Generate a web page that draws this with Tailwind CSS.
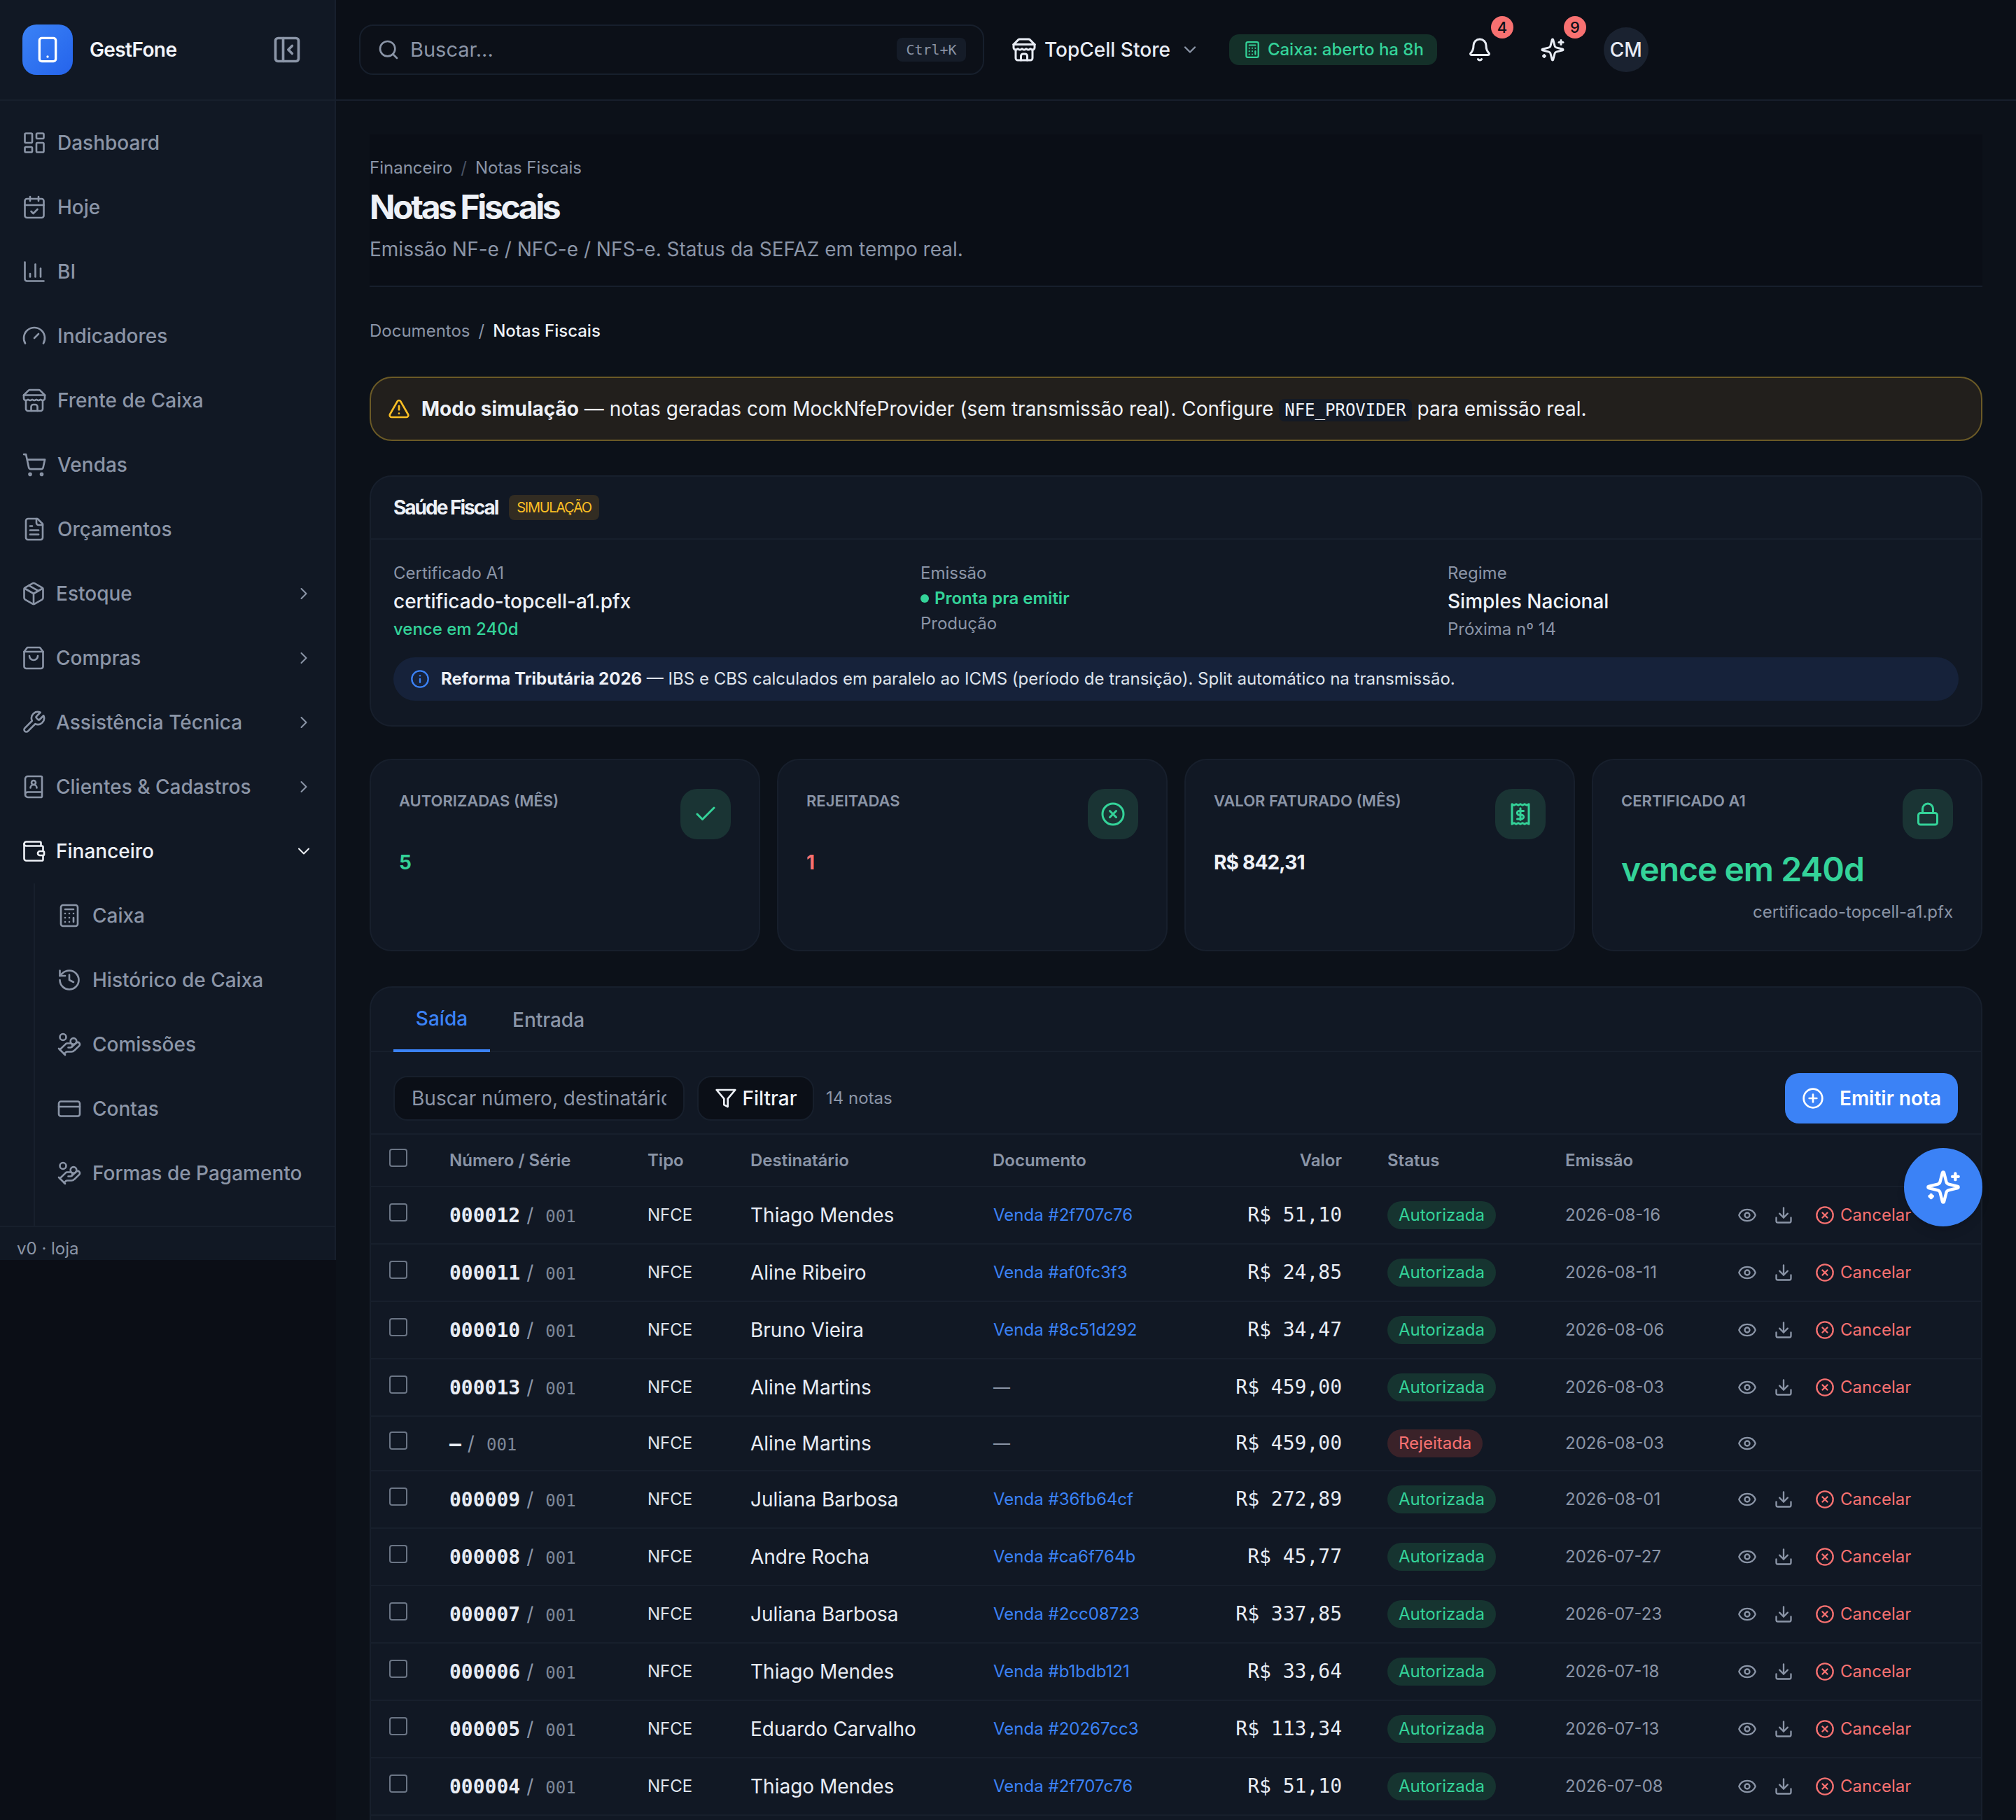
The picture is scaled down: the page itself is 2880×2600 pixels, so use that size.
<!DOCTYPE html>
<html lang="pt-BR">
<head>
<meta charset="utf-8">
<title>Notas Fiscais</title>
<script src="https://cdn.jsdelivr.net/npm/@tailwindcss/browser@4"></script>
</head>
<body class="bg-[#0b0f17]">
<svg class="absolute w-0 h-0" aria-hidden="true">
  <defs>
    <symbol id="i-phone" viewBox="0 0 24 24"><rect x="5" y="2" width="14" height="20" rx="2"/><path d="M12 18h.01"/></symbol>
    <symbol id="i-panel" viewBox="0 0 24 24"><rect x="3" y="3" width="18" height="18" rx="2"/><path d="M9 3v18"/><path d="m16 15-3-3 3-3"/></symbol>
    <symbol id="i-dash" viewBox="0 0 24 24"><rect x="3" y="3" width="7" height="9" rx="1"/><rect x="14" y="3" width="7" height="5" rx="1"/><rect x="14" y="12" width="7" height="9" rx="1"/><rect x="3" y="16" width="7" height="5" rx="1"/></symbol>
    <symbol id="i-cal" viewBox="0 0 24 24"><path d="M8 2v4"/><path d="M16 2v4"/><rect x="3" y="4" width="18" height="18" rx="2"/><path d="M3 10h18"/><path d="m9 16 2 2 4-4"/></symbol>
    <symbol id="i-chart" viewBox="0 0 24 24"><path d="M3 3v16a2 2 0 0 0 2 2h16"/><path d="M18 17V9"/><path d="M13 17V5"/><path d="M8 17v-3"/></symbol>
    <symbol id="i-gauge" viewBox="0 0 24 24"><path d="m12 14 4-4"/><path d="M3.34 19a10 10 0 1 1 17.32 0"/></symbol>
    <symbol id="i-store" viewBox="0 0 24 24"><path d="m2 7 4.41-4.41A2 2 0 0 1 7.83 2h8.34a2 2 0 0 1 1.42.59L22 7"/><path d="M4 12v8a2 2 0 0 0 2 2h12a2 2 0 0 0 2-2v-8"/><path d="M15 22v-4a2 2 0 0 0-2-2h-2a2 2 0 0 0-2 2v4"/><path d="M2 7h20"/><path d="M22 7v3a2 2 0 0 1-2 2a2.7 2.7 0 0 1-1.59-.63.7.7 0 0 0-.82 0A2.7 2.7 0 0 1 16 12a2.7 2.7 0 0 1-1.59-.63.7.7 0 0 0-.82 0A2.7 2.7 0 0 1 12 12a2.7 2.7 0 0 1-1.59-.63.7.7 0 0 0-.82 0A2.7 2.7 0 0 1 8 12a2.7 2.7 0 0 1-1.59-.63.7.7 0 0 0-.82 0A2.7 2.7 0 0 1 4 12a2 2 0 0 1-2-2V7"/></symbol>
    <symbol id="i-cart" viewBox="0 0 24 24"><circle cx="8" cy="21" r="1"/><circle cx="19" cy="21" r="1"/><path d="M2.05 2.05h2l2.66 12.42a2 2 0 0 0 2 1.58h9.78a2 2 0 0 0 1.95-1.57l1.65-7.43H5.12"/></symbol>
    <symbol id="i-file" viewBox="0 0 24 24"><path d="M15 2H6a2 2 0 0 0-2 2v16a2 2 0 0 0 2 2h12a2 2 0 0 0 2-2V7Z"/><path d="M14 2v4a2 2 0 0 0 2 2h4"/><path d="M10 9H8"/><path d="M16 13H8"/><path d="M16 17H8"/></symbol>
    <symbol id="i-package" viewBox="0 0 24 24"><path d="M11 21.73a2 2 0 0 0 2 0l7-4A2 2 0 0 0 21 16V8a2 2 0 0 0-1-1.73l-7-4a2 2 0 0 0-2 0l-7 4A2 2 0 0 0 3 8v8a2 2 0 0 0 1 1.73z"/><path d="M12 22V12"/><path d="M3.29 7 12 12l8.71-5"/><path d="m7.5 4.27 9 5.15"/></symbol>
    <symbol id="i-bag" viewBox="0 0 24 24"><path d="M6 2 3 6v14a2 2 0 0 0 2 2h14a2 2 0 0 0 2-2V6l-3-4Z"/><path d="M3 6h18"/><path d="M16 10a4 4 0 0 1-8 0"/></symbol>
    <symbol id="i-wrench" viewBox="0 0 24 24"><path d="M14.7 6.3a1 1 0 0 0 0 1.4l1.6 1.6a1 1 0 0 0 1.4 0l3.77-3.77a6 6 0 0 1-7.94 7.94l-6.91 6.91a2.12 2.12 0 0 1-3-3l6.91-6.91a6 6 0 0 1 7.94-7.94l-3.76 3.76z"/></symbol>
    <symbol id="i-book" viewBox="0 0 24 24"><path d="M15 13a3 3 0 1 0-6 0"/><path d="M4 19.5v-15A2.5 2.5 0 0 1 6.5 2H19a1 1 0 0 1 1 1v18a1 1 0 0 1-1 1H6.5a1 1 0 0 1 0-5H20"/><circle cx="12" cy="8" r="2"/></symbol>
    <symbol id="i-wallet" viewBox="0 0 24 24"><path d="M19 7V4a1 1 0 0 0-1-1H5a2 2 0 0 0 0 4h15a1 1 0 0 1 1 1v4h-3a2 2 0 0 0 0 4h3a1 1 0 0 0 1-1v-2a1 1 0 0 0-1-1"/><path d="M3 5v14a2 2 0 0 0 2 2h15a1 1 0 0 0 1-1v-4"/></symbol>
    <symbol id="i-calc" viewBox="0 0 24 24"><rect x="4" y="2" width="16" height="20" rx="2"/><path d="M8 6h8"/><path d="M16 14v4"/><path d="M16 10h.01"/><path d="M12 10h.01"/><path d="M8 10h.01"/><path d="M12 14h.01"/><path d="M8 14h.01"/><path d="M12 18h.01"/><path d="M8 18h.01"/></symbol>
    <symbol id="i-history" viewBox="0 0 24 24"><path d="M3 12a9 9 0 1 0 9-9 9.75 9.75 0 0 0-6.74 2.74L3 8"/><path d="M3 3v5h5"/><path d="M12 7v5l4 2"/></symbol>
    <symbol id="i-hand" viewBox="0 0 24 24"><path d="M11 15h2a2 2 0 1 0 0-4h-3c-.6 0-1.1.2-1.4.6L3 17"/><path d="m7 21 1.6-1.4c.3-.4.8-.6 1.4-.6h4c1.1 0 2.1-.4 2.8-1.2l4.6-4.4a2 2 0 0 0-2.75-2.91l-4.2 3.9"/><path d="m2 16 6 6"/><circle cx="16" cy="9" r="2.9"/><circle cx="6" cy="5" r="3"/></symbol>
    <symbol id="i-card" viewBox="0 0 24 24"><rect x="2" y="5" width="20" height="14" rx="2"/><path d="M2 10h20"/></symbol>
    <symbol id="i-right" viewBox="0 0 24 24"><path d="m9 18 6-6-6-6"/></symbol>
    <symbol id="i-down" viewBox="0 0 24 24"><path d="m6 9 6 6 6-6"/></symbol>
    <symbol id="i-search" viewBox="0 0 24 24"><circle cx="11" cy="11" r="8"/><path d="m21 21-4.3-4.3"/></symbol>
    <symbol id="i-warn" viewBox="0 0 24 24"><path d="m21.73 18-8-14a2 2 0 0 0-3.48 0l-8 14A2 2 0 0 0 4 21h16a2 2 0 0 0 1.73-3"/><path d="M12 9v4"/><path d="M12 17h.01"/></symbol>
    <symbol id="i-bell" viewBox="0 0 24 24"><path d="M10.268 21a2 2 0 0 0 3.464 0"/><path d="M3.262 15.326A1 1 0 0 0 4 17h16a1 1 0 0 0 .74-1.673C19.41 13.956 18 12.499 18 8A6 6 0 0 0 6 8c0 4.499-1.411 5.956-2.738 7.326"/></symbol>
    <symbol id="i-spark" viewBox="0 0 24 24"><path d="M9.937 15.5A2 2 0 0 0 8.5 14.063l-6.135-1.582a.5.5 0 0 1 0-.962L8.5 9.936A2 2 0 0 0 9.937 8.5l1.582-6.135a.5.5 0 0 1 .963 0L14.063 8.5A2 2 0 0 0 15.5 9.937l6.135 1.581a.5.5 0 0 1 0 .964L15.5 14.063a2 2 0 0 0-1.437 1.437l-1.582 6.135a.5.5 0 0 1-.963 0z"/><path d="M20 3v4"/><path d="M22 5h-4"/><path d="M4 17v2"/><path d="M5 18H3"/></symbol>
    <symbol id="i-info" viewBox="0 0 24 24"><circle cx="12" cy="12" r="10"/><path d="M12 16v-4"/><path d="M12 8h.01"/></symbol>
    <symbol id="i-check" viewBox="0 0 24 24"><path d="M20 6 9 17l-5-5"/></symbol>
    <symbol id="i-x" viewBox="0 0 24 24"><circle cx="12" cy="12" r="10"/><path d="m15 9-6 6"/><path d="m9 9 6 6"/></symbol>
    <symbol id="i-receipt" viewBox="0 0 24 24"><path d="M4 2.5l2 1 2-1 2 1 2-1 2 1 2-1 2 1 2-1v19l-2-1-2 1-2-1-2 1-2-1-2 1-2-1-2 1z"/><path d="M12 6.5v11"/><path d="M15 9h-4.2a1.9 1.9 0 0 0 0 3.8h2.4a1.9 1.9 0 0 1 0 3.8H9"/></symbol>
    <symbol id="i-lock" viewBox="0 0 24 24"><rect x="3" y="11" width="18" height="11" rx="2"/><path d="M7 11V7a5 5 0 0 1 10 0v4"/></symbol>
    <symbol id="i-filter" viewBox="0 0 24 24"><path d="M22 3H2l8 9.46V19l4 2v-8.54z"/></symbol>
    <symbol id="i-plus" viewBox="0 0 24 24"><circle cx="12" cy="12" r="10"/><path d="M8 12h8"/><path d="M12 8v8"/></symbol>
    <symbol id="i-eye" viewBox="0 0 24 24"><path d="M2.062 12.348a1 1 0 0 1 0-.696 10.75 10.75 0 0 1 19.876 0 1 1 0 0 1 0 .696 10.75 10.75 0 0 1-19.876 0"/><circle cx="12" cy="12" r="3"/></symbol>
    <symbol id="i-dl" viewBox="0 0 24 24"><path d="M21 15v4a2 2 0 0 1-2 2H5a2 2 0 0 1-2-2v-4"/><path d="m7 10 5 5 5-5"/><path d="M12 15V3"/></symbol>
  </defs>
</svg>

<div class="relative flex w-[2880px] h-[2600px] overflow-hidden bg-[#0c1119] font-[Inter,sans-serif] text-[#e8ecf4]">

  <!-- Sidebar -->
  <div class="shrink-0 w-[480px] h-[2600px] bg-[#0b0e16]">
  <aside class="flex flex-col w-[480px] h-[1800px] bg-[#111824] border-r-2 border-[#171f2c]">
    <div class="flex items-center shrink-0 h-[144px] pl-[32px] pr-[46px] border-b-2 border-[#171f2c]">
      <div class="flex items-center justify-center w-[72px] h-[72px] rounded-[20px] bg-gradient-to-br from-[#3b82f6] to-[#2563eb] text-white">
        <svg class="w-[40px] h-[40px] fill-none stroke-current stroke-2 [stroke-linecap:round] [stroke-linejoin:round]"><use href="#i-phone"/></svg>
      </div>
      <span class="ml-[24px] text-[28px] font-semibold tracking-[-0.6px] text-[#f3f5fa]">GestFone</span>
      <svg class="ml-auto w-[44px] h-[44px] text-[#8b95a7] fill-none stroke-current stroke-2 [stroke-linecap:round] [stroke-linejoin:round]"><use href="#i-panel"/></svg>
    </div>
    <nav class="flex-1 min-h-0 overflow-hidden pt-[14px] text-[28px] font-medium text-[#8b95a7] [&_svg]:fill-none [&_svg]:stroke-current [&_svg]:stroke-[1.75] [&_svg]:[stroke-linecap:round] [&_svg]:[stroke-linejoin:round]">
      <div class="flex items-center h-[92px] pl-[31px] gap-[15px]"><svg class="w-[36px] h-[36px]"><use href="#i-dash"/></svg>Dashboard</div>
      <div class="flex items-center h-[92px] pl-[31px] gap-[15px]"><svg class="w-[36px] h-[36px]"><use href="#i-cal"/></svg>Hoje</div>
      <div class="flex items-center h-[92px] pl-[31px] gap-[15px]"><svg class="w-[36px] h-[36px]"><use href="#i-chart"/></svg>BI</div>
      <div class="flex items-center h-[92px] pl-[31px] gap-[15px]"><svg class="w-[36px] h-[36px]"><use href="#i-gauge"/></svg>Indicadores</div>
      <div class="flex items-center h-[92px] pl-[31px] gap-[15px]"><svg class="w-[36px] h-[36px]"><use href="#i-store"/></svg>Frente de Caixa</div>
      <div class="flex items-center h-[92px] pl-[31px] gap-[15px]"><svg class="w-[36px] h-[36px]"><use href="#i-cart"/></svg>Vendas</div>
      <div class="flex items-center h-[92px] pl-[31px] gap-[15px]"><svg class="w-[36px] h-[36px]"><use href="#i-file"/></svg>Orçamentos</div>
      <div class="flex items-center h-[92px] pl-[30px] pr-[30px] gap-[14px]"><svg class="w-[36px] h-[36px]"><use href="#i-package"/></svg>Estoque<svg class="ml-auto w-[28px] h-[28px]"><use href="#i-right"/></svg></div>
      <div class="flex items-center h-[92px] pl-[30px] pr-[30px] gap-[14px]"><svg class="w-[36px] h-[36px]"><use href="#i-bag"/></svg>Compras<svg class="ml-auto w-[28px] h-[28px]"><use href="#i-right"/></svg></div>
      <div class="flex items-center h-[92px] pl-[30px] pr-[30px] gap-[14px]"><svg class="w-[36px] h-[36px]"><use href="#i-wrench"/></svg>Assistência Técnica<svg class="ml-auto w-[28px] h-[28px]"><use href="#i-right"/></svg></div>
      <div class="flex items-center h-[92px] pl-[30px] pr-[30px] gap-[14px]"><svg class="w-[36px] h-[36px]"><use href="#i-book"/></svg>Clientes &amp; Cadastros<svg class="ml-auto w-[28px] h-[28px]"><use href="#i-right"/></svg></div>
      <div class="flex items-center h-[92px] pl-[30px] pr-[30px] gap-[14px] text-[#eef1f7]"><svg class="w-[36px] h-[36px]"><use href="#i-wallet"/></svg>Financeiro<svg class="ml-auto w-[28px] h-[28px]"><use href="#i-down"/></svg></div>
      <div class="ml-[48px] pb-[60px] border-l-2 border-[#171f2c]">
        <div class="flex items-center h-[92px] pl-[31px] gap-[15px]"><svg class="w-[36px] h-[36px]"><use href="#i-calc"/></svg>Caixa</div>
        <div class="flex items-center h-[92px] pl-[31px] gap-[15px]"><svg class="w-[36px] h-[36px]"><use href="#i-history"/></svg>Histórico de Caixa</div>
        <div class="flex items-center h-[92px] pl-[31px] gap-[15px]"><svg class="w-[36px] h-[36px]"><use href="#i-hand"/></svg>Comissões</div>
        <div class="flex items-center h-[92px] pl-[31px] gap-[15px]"><svg class="w-[36px] h-[36px]"><use href="#i-card"/></svg>Contas</div>
        <div class="flex items-center h-[92px] pl-[31px] gap-[15px]"><svg class="w-[36px] h-[36px]"><use href="#i-hand"/></svg>Formas de Pagamento</div>
      </div>
    </nav>
    <div class="flex items-center shrink-0 h-[49px] pl-[24px] pt-[14px] border-t-2 border-[#171f2c] text-[24px] text-[#8b95a7]">v0 · loja</div>
  </aside>
  </div>

  <!-- Right column -->
  <div class="flex-1 min-w-0">
    <header class="flex items-center h-[144px] pl-[33px] bg-[#0b0f17] border-b-2 border-[#171f2c]">
      <div class="flex items-center w-[893px] h-[72px] pl-[24px] pr-[24px] gap-[15px] rounded-[20px] border-2 border-[#171f2c] bg-[#0c1018]">
        <svg class="w-[32px] h-[32px] text-[#8b95a7] fill-none stroke-current stroke-2 [stroke-linecap:round] [stroke-linejoin:round]"><use href="#i-search"/></svg>
        <span class="text-[29px] text-[#8b95a7]">Buscar...</span>
        <kbd class="ml-auto flex items-center justify-center w-[99px] h-[34px] rounded-[8px] bg-[#151c28] font-['DejaVu_Sans_Mono',monospace] text-[20px] text-[#8b95a7]">Ctrl+K</kbd>
      </div>
      <div class="flex items-center ml-[39px]">
        <svg class="w-[36px] h-[36px] fill-none stroke-current stroke-2 [stroke-linecap:round] [stroke-linejoin:round]"><use href="#i-store"/></svg>
        <span class="ml-[11px] text-[28px] font-medium">TopCell Store</span>
        <svg class="ml-[14px] w-[28px] h-[28px] text-[#8b95a7] fill-none stroke-current stroke-2 [stroke-linecap:round] [stroke-linejoin:round]"><use href="#i-down"/></svg>
      </div>
      <div class="flex items-center ml-[42px] w-[297px] h-[44px] pl-[20px] gap-[9px] rounded-[14px] bg-[#143029] text-[#34d399] text-[24px] font-medium whitespace-nowrap">
        <svg class="w-[26px] h-[26px] fill-none stroke-current stroke-2 [stroke-linecap:round] [stroke-linejoin:round]"><use href="#i-calc"/></svg>Caixa: aberto ha 8h
      </div>
      <div class="relative ml-[43px] w-[36px] h-[36px]">
        <svg class="w-[36px] h-[36px] fill-none stroke-current stroke-2 [stroke-linecap:round] [stroke-linejoin:round]"><use href="#i-bell"/></svg>
        <span class="absolute left-[34px] top-[-30px] flex items-center justify-center w-[32px] h-[32px] rounded-full bg-[#f87171] text-[#0b0f17] text-[22px] font-medium">4</span>
      </div>
      <div class="relative ml-[68px] w-[36px] h-[36px]">
        <svg class="w-[36px] h-[36px] fill-none stroke-current stroke-2 [stroke-linecap:round] [stroke-linejoin:round]"><use href="#i-spark"/></svg>
        <span class="absolute left-[34px] top-[-30px] flex items-center justify-center w-[32px] h-[32px] rounded-full bg-[#f87171] text-[#0b0f17] text-[22px] font-medium">9</span>
      </div>
      <div class="flex items-center justify-center ml-[55px] w-[64px] h-[64px] rounded-full bg-[#1a2230] text-[28px] font-medium">CM</div>
    </header>

    <main class="pl-[48px] pr-[48px]">
      <section class="mt-[48px] h-[218px] pt-[30px] bg-[#0a0e16] border-b-2 border-[#171f2c]">
        <div class="flex items-center h-[36px] gap-[12px] text-[24px] text-[#8b95a7]"><span>Financeiro</span><span class="text-[#4a5364]">/</span><span>Notas Fiscais</span></div>
        <h1 class="mt-[8px] h-[60px] leading-[60px] text-[48px] font-bold tracking-[-3.4px] text-[#eef1f7]">Notas Fiscais</h1>
        <p class="mt-[10px] h-[40px] leading-[40px] text-[28px] text-[#8b95a7]">Emissão NF-e / NFC-e / NFS-e. Status da SEFAZ em tempo real.</p>
      </section>

      <div class="flex items-center mt-[45px] h-[36px] gap-[12px] text-[24px] text-[#8b95a7]"><span>Documentos</span><span>/</span><span class="font-medium text-[#eef1f7]">Notas Fiscais</span></div>

      <div class="flex items-center mt-[47px] h-[92px] pl-[24px] gap-[16px] rounded-[32px] border-2 border-[#6b5a26] bg-[#221f1c] text-[28px] text-[#eef1f7]">
        <svg class="w-[32px] h-[32px] text-[#fbbf24] fill-none stroke-current stroke-2 [stroke-linecap:round] [stroke-linejoin:round]"><use href="#i-warn"/></svg>
        <p><strong class="font-bold">Modo simulação</strong> — notas geradas com MockNfeProvider (sem transmissão real). Configure <code class="px-[8px] py-[2px] rounded-[8px] bg-[#141a25] font-['DejaVu_Sans_Mono',monospace] text-[24px]">NFE_PROVIDER</code> para emissão real.</p>
      </div>

      <section class="mt-[49px] h-[359px] rounded-[32px] border-2 border-[#171f2c] bg-[#111824]">
        <div class="flex items-center h-[90px] pl-[32px] gap-[16px] border-b-2 border-[#171f2c]">
          <h2 class="text-[28px] font-bold tracking-[-2px] text-[#eef1f7]">Saúde Fiscal</h2>
          <span class="flex items-center h-[36px] px-[11px] rounded-[8px] bg-[#322c22] text-[#fbbf24] text-[20px] tracking-[-1.3px]">SIMULAÇÃO</span>
        </div>
        <div class="grid grid-cols-[753px_753px_1fr] pl-[32px] pt-[30px]">
          <div>
            <div class="h-[36px] leading-[36px] text-[24px] text-[#8b95a7]">Certificado A1</div>
            <div class="mt-[2px] h-[40px] leading-[40px] text-[28px] font-medium text-[#eef1f7]">certificado-topcell-a1.pfx</div>
            <div class="h-[40px] leading-[40px] text-[24px] font-medium text-[#34d399]">vence em 240d</div>
          </div>
          <div>
            <div class="h-[36px] leading-[36px] text-[24px] text-[#8b95a7]">Emissão</div>
            <div class="flex items-center h-[36px] gap-[8px] text-[24px] font-semibold text-[#34d399]"><span class="w-[12px] h-[12px] rounded-full bg-[#34d399]"></span>Pronta pra emitir</div>
            <div class="h-[36px] leading-[36px] text-[24px] text-[#8b95a7]">Produção</div>
          </div>
          <div>
            <div class="h-[36px] leading-[36px] text-[24px] text-[#8b95a7]">Regime</div>
            <div class="mt-[2px] h-[40px] leading-[40px] text-[28px] font-medium text-[#eef1f7]">Simples Nacional</div>
            <div class="h-[40px] leading-[40px] text-[24px] text-[#8b95a7]">Próxima nº 14</div>
          </div>
        </div>
        <div class="flex items-center ml-[32px] mr-[32px] mt-[20px] h-[62px] pl-[24px] gap-[16px] rounded-[32px] bg-[#16223a] text-[24px] text-[#dfe4ec]">
          <svg class="w-[28px] h-[28px] text-[#3b82f6] fill-none stroke-current stroke-2 [stroke-linecap:round] [stroke-linejoin:round]"><use href="#i-info"/></svg>
          <p><strong class="font-bold text-[#eef1f7]">Reforma Tributária 2026</strong> — IBS e CBS calculados em paralelo ao ICMS (período de transição). Split automático na transmissão.</p>
        </div>
      </section>

      <section class="grid grid-cols-4 gap-[24px] mt-[46px] h-[275px] [&_svg]:fill-none [&_svg]:stroke-current [&_svg]:stroke-2 [&_svg]:[stroke-linecap:round] [&_svg]:[stroke-linejoin:round]">
        <div class="relative pl-[40px] pt-[40px] rounded-[32px] border-2 border-[#171f2c] bg-[#111824]">
          <div class="h-[36px] leading-[36px] text-[22px] font-semibold text-[#8b95a7]">AUTORIZADAS (MÊS)</div>
          <div class="absolute top-[41px] right-[40px] flex items-center justify-center w-[72px] h-[72px] rounded-[24px] bg-[#1a3434] text-[#34d399]"><svg class="w-[36px] h-[36px]"><use href="#i-check"/></svg></div>
          <div class="mt-[50px] h-[40px] leading-[40px] text-[28px] font-bold text-[#34d399]">5</div>
        </div>
        <div class="relative pl-[40px] pt-[40px] rounded-[32px] border-2 border-[#171f2c] bg-[#111824]">
          <div class="h-[36px] leading-[36px] text-[22px] font-semibold text-[#8b95a7]">REJEITADAS</div>
          <div class="absolute top-[41px] right-[40px] flex items-center justify-center w-[72px] h-[72px] rounded-[24px] bg-[#1a3434] text-[#34d399]"><svg class="w-[36px] h-[36px]"><use href="#i-x"/></svg></div>
          <div class="mt-[50px] h-[40px] leading-[40px] text-[28px] font-bold text-[#f87171]">1</div>
        </div>
        <div class="relative pl-[40px] pt-[40px] rounded-[32px] border-2 border-[#171f2c] bg-[#111824]">
          <div class="h-[36px] leading-[36px] text-[22px] font-semibold text-[#8b95a7]">VALOR FATURADO (MÊS)</div>
          <div class="absolute top-[41px] right-[40px] flex items-center justify-center w-[72px] h-[72px] rounded-[24px] bg-[#1a3434] text-[#34d399]"><svg class="w-[36px] h-[36px]"><use href="#i-receipt"/></svg></div>
          <div class="mt-[50px] h-[40px] leading-[40px] text-[28px] font-bold tracking-[-0.8px] text-[#eef1f7]">R$ 842,31</div>
        </div>
        <div class="relative pl-[40px] pr-[40px] pt-[40px] rounded-[32px] border-2 border-[#171f2c] bg-[#111824]">
          <div class="h-[36px] leading-[36px] text-[22px] font-semibold text-[#8b95a7]">CERTIFICADO A1</div>
          <div class="absolute top-[41px] right-[40px] flex items-center justify-center w-[72px] h-[72px] rounded-[24px] bg-[#1a3434] text-[#34d399]"><svg class="w-[36px] h-[36px]"><use href="#i-lock"/></svg></div>
          <div class="mt-[48px] h-[64px] leading-[64px] text-[48px] font-semibold tracking-[-1px] text-[#34d399]">vence em 240d</div>
          <div class="mt-[11px] h-[36px] leading-[36px] text-right text-[24px] text-[#8b95a7]">certificado-topcell-a1.pfx</div>
        </div>
      </section>

      <section class="mt-[50px] h-[1300px] rounded-[32px] border-2 border-[#171f2c] bg-[#111824]">
        <div class="flex h-[92px] pl-[32px] border-b-2 border-[#171f2c] text-[28px] font-medium">
          <div class="flex items-center justify-center w-[138px] h-[92px] border-b-4 border-[#3b82f6] text-[#3b82f6]">Saída</div>
          <div class="flex items-center ml-[32px] h-[92px] text-[#8b95a7]">Entrada</div>
        </div>
        <div class="flex items-center h-[118px] pl-[32px] pr-[33px] pt-[16px] border-b-2 border-[#171f2c]">
          <div class="flex items-center w-[416px] h-[64px] pl-[24px] pr-[24px] rounded-[20px] border-2 border-[#171f2c] bg-[#0b0f17] text-[28px] text-[#8b95a7]"><input class="w-full bg-transparent outline-none placeholder:text-[#8b95a7]" placeholder="Buscar número, destinatário ou chave"></div>
          <div class="flex items-center justify-center ml-[18px] w-[167px] h-[64px] gap-[8px] rounded-[20px] border-2 border-[#171f2c] bg-[#0b0f17] text-[28px] font-medium text-[#eef1f7]">
            <svg class="w-[32px] h-[32px] fill-none stroke-current stroke-2 [stroke-linecap:round] [stroke-linejoin:round]"><use href="#i-filter"/></svg>Filtrar
          </div>
          <span class="ml-[17px] text-[24px] text-[#8b95a7]">14 notas</span>
          <div class="flex items-center justify-center ml-auto w-[247px] h-[72px] gap-[22px] rounded-[20px] bg-[#3b82f6] text-[28px] font-semibold text-white">
            <svg class="w-[32px] h-[32px] fill-none stroke-current stroke-2 [stroke-linecap:round] [stroke-linejoin:round]"><use href="#i-plus"/></svg>Emitir nota
          </div>
        </div>
        <table class="w-[2300px] table-fixed border-collapse text-[24px] [&_td]:border-b-2 [&_td]:border-[#171f2c] [&_td]:align-middle [&_th]:border-b-2 [&_th]:border-[#171f2c] [&_th]:text-left [&_svg]:fill-none [&_svg]:stroke-current [&_svg]:stroke-2 [&_svg]:[stroke-linecap:round] [&_svg]:[stroke-linejoin:round]">
          <colgroup>
            <col class="w-[88px]"><col class="w-[283px]"><col class="w-[147px]"><col class="w-[346px]"><col class="w-[326px]"><col class="w-[238px]"><col class="w-[278px]"><col class="w-[224px]"><col class="w-[370px]">
          </colgroup>
          <thead>
            <tr class="h-[74px] text-[#8b95a7] font-semibold">
              <th class="pl-[26px]"><span class="block w-[26px] h-[26px] mb-[8px] rounded-[4px] border-2 border-[#6b7585]"></span></th>
              <th class="pl-[24px] font-semibold">Número / Série</th>
              <th class="pl-[24px] font-semibold">Tipo</th>
              <th class="pl-[24px] font-semibold">Destinatário</th>
              <th class="pl-[24px] font-semibold">Documento</th>
              <th class="!text-right pr-[41px] font-semibold">Valor</th>
              <th class="pl-[24px] font-semibold">Status</th>
              <th class="font-semibold">Emissão</th>
              <th></th>
            </tr>
          </thead>
          <tbody>
            <tr class="h-[82px]"><td class="pl-[26px]"><span class="block w-[26px] h-[26px] mb-[8px] rounded-[4px] border-2 border-[#6b7585]"></span></td><td class="pl-[24px]"><span class="font-['DejaVu_Sans_Mono',monospace] text-[28px] font-bold">000012</span><span class="ml-[9px] text-[28px] text-[#8b95a7]">/</span><span class="ml-[17px] font-['DejaVu_Sans_Mono',monospace] text-[24px] text-[#7d8797]">001</span></td><td class="pl-[24px] text-[#dfe4ec]">NFCE</td><td class="pl-[24px] text-[28px]">Thiago Mendes</td><td class="pl-[25px] text-[#3b82f6]">Venda #2f707c76</td><td class="pr-[41px] text-right font-['DejaVu_Sans_Mono',monospace] text-[28px]">R$ 51,10</td><td class="pl-[24px]"><span class="inline-flex items-center h-[40px] px-[16px] rounded-full bg-[#163430] text-[#34d399]">Autorizada</span></td><td class="text-[#8b95a7]">2026-08-16</td><td class="pl-[22px]"><div class="flex items-center text-[#8b95a7]"><svg class="w-[28px] h-[28px]"><use href="#i-eye"/></svg><svg class="ml-[24px] w-[28px] h-[28px]"><use href="#i-dl"/></svg><span class="flex items-center ml-[31px] gap-[8px] text-[#f87171]"><svg class="w-[28px] h-[28px]"><use href="#i-x"/></svg>Cancelar</span></div></td></tr>
            <tr class="h-[82px]"><td class="pl-[26px]"><span class="block w-[26px] h-[26px] mb-[8px] rounded-[4px] border-2 border-[#6b7585]"></span></td><td class="pl-[24px]"><span class="font-['DejaVu_Sans_Mono',monospace] text-[28px] font-bold">000011</span><span class="ml-[9px] text-[28px] text-[#8b95a7]">/</span><span class="ml-[17px] font-['DejaVu_Sans_Mono',monospace] text-[24px] text-[#7d8797]">001</span></td><td class="pl-[24px] text-[#dfe4ec]">NFCE</td><td class="pl-[24px] text-[28px]">Aline Ribeiro</td><td class="pl-[25px] text-[#3b82f6]">Venda #af0fc3f3</td><td class="pr-[41px] text-right font-['DejaVu_Sans_Mono',monospace] text-[28px]">R$ 24,85</td><td class="pl-[24px]"><span class="inline-flex items-center h-[40px] px-[16px] rounded-full bg-[#163430] text-[#34d399]">Autorizada</span></td><td class="text-[#8b95a7]">2026-08-11</td><td class="pl-[22px]"><div class="flex items-center text-[#8b95a7]"><svg class="w-[28px] h-[28px]"><use href="#i-eye"/></svg><svg class="ml-[24px] w-[28px] h-[28px]"><use href="#i-dl"/></svg><span class="flex items-center ml-[31px] gap-[8px] text-[#f87171]"><svg class="w-[28px] h-[28px]"><use href="#i-x"/></svg>Cancelar</span></div></td></tr>
            <tr class="h-[82px]"><td class="pl-[26px]"><span class="block w-[26px] h-[26px] mb-[8px] rounded-[4px] border-2 border-[#6b7585]"></span></td><td class="pl-[24px]"><span class="font-['DejaVu_Sans_Mono',monospace] text-[28px] font-bold">000010</span><span class="ml-[9px] text-[28px] text-[#8b95a7]">/</span><span class="ml-[17px] font-['DejaVu_Sans_Mono',monospace] text-[24px] text-[#7d8797]">001</span></td><td class="pl-[24px] text-[#dfe4ec]">NFCE</td><td class="pl-[24px] text-[28px]">Bruno Vieira</td><td class="pl-[25px] text-[#3b82f6]">Venda #8c51d292</td><td class="pr-[41px] text-right font-['DejaVu_Sans_Mono',monospace] text-[28px]">R$ 34,47</td><td class="pl-[24px]"><span class="inline-flex items-center h-[40px] px-[16px] rounded-full bg-[#163430] text-[#34d399]">Autorizada</span></td><td class="text-[#8b95a7]">2026-08-06</td><td class="pl-[22px]"><div class="flex items-center text-[#8b95a7]"><svg class="w-[28px] h-[28px]"><use href="#i-eye"/></svg><svg class="ml-[24px] w-[28px] h-[28px]"><use href="#i-dl"/></svg><span class="flex items-center ml-[31px] gap-[8px] text-[#f87171]"><svg class="w-[28px] h-[28px]"><use href="#i-x"/></svg>Cancelar</span></div></td></tr>
            <tr class="h-[82px]"><td class="pl-[26px]"><span class="block w-[26px] h-[26px] mb-[8px] rounded-[4px] border-2 border-[#6b7585]"></span></td><td class="pl-[24px]"><span class="font-['DejaVu_Sans_Mono',monospace] text-[28px] font-bold">000013</span><span class="ml-[9px] text-[28px] text-[#8b95a7]">/</span><span class="ml-[17px] font-['DejaVu_Sans_Mono',monospace] text-[24px] text-[#7d8797]">001</span></td><td class="pl-[24px] text-[#dfe4ec]">NFCE</td><td class="pl-[24px] text-[28px]">Aline Martins</td><td class="pl-[25px] text-[#8b95a7]">—</td><td class="pr-[41px] text-right font-['DejaVu_Sans_Mono',monospace] text-[28px]">R$ 459,00</td><td class="pl-[24px]"><span class="inline-flex items-center h-[40px] px-[16px] rounded-full bg-[#163430] text-[#34d399]">Autorizada</span></td><td class="text-[#8b95a7]">2026-08-03</td><td class="pl-[22px]"><div class="flex items-center text-[#8b95a7]"><svg class="w-[28px] h-[28px]"><use href="#i-eye"/></svg><svg class="ml-[24px] w-[28px] h-[28px]"><use href="#i-dl"/></svg><span class="flex items-center ml-[31px] gap-[8px] text-[#f87171]"><svg class="w-[28px] h-[28px]"><use href="#i-x"/></svg>Cancelar</span></div></td></tr>
            <tr class="h-[78px]"><td class="pl-[26px]"><span class="block w-[26px] h-[26px] mb-[8px] rounded-[4px] border-2 border-[#6b7585]"></span></td><td class="pl-[24px]"><span class="font-['DejaVu_Sans_Mono',monospace] text-[28px] font-bold">—</span><span class="ml-[9px] text-[28px] text-[#8b95a7]">/</span><span class="ml-[17px] font-['DejaVu_Sans_Mono',monospace] text-[24px] text-[#7d8797]">001</span></td><td class="pl-[24px] text-[#dfe4ec]">NFCE</td><td class="pl-[24px] text-[28px]">Aline Martins</td><td class="pl-[25px] text-[#8b95a7]">—</td><td class="pr-[41px] text-right font-['DejaVu_Sans_Mono',monospace] text-[28px]">R$ 459,00</td><td class="pl-[24px]"><span class="inline-flex items-center h-[40px] px-[16px] rounded-full bg-[#3a2229] text-[#f87171]">Rejeitada</span></td><td class="text-[#8b95a7]">2026-08-03</td><td class="pl-[22px]"><div class="flex items-center text-[#8b95a7]"><svg class="w-[28px] h-[28px]"><use href="#i-eye"/></svg></div></td></tr>
            <tr class="h-[82px]"><td class="pl-[26px]"><span class="block w-[26px] h-[26px] mb-[8px] rounded-[4px] border-2 border-[#6b7585]"></span></td><td class="pl-[24px]"><span class="font-['DejaVu_Sans_Mono',monospace] text-[28px] font-bold">000009</span><span class="ml-[9px] text-[28px] text-[#8b95a7]">/</span><span class="ml-[17px] font-['DejaVu_Sans_Mono',monospace] text-[24px] text-[#7d8797]">001</span></td><td class="pl-[24px] text-[#dfe4ec]">NFCE</td><td class="pl-[24px] text-[28px]">Juliana Barbosa</td><td class="pl-[25px] text-[#3b82f6]">Venda #36fb64cf</td><td class="pr-[41px] text-right font-['DejaVu_Sans_Mono',monospace] text-[28px]">R$ 272,89</td><td class="pl-[24px]"><span class="inline-flex items-center h-[40px] px-[16px] rounded-full bg-[#163430] text-[#34d399]">Autorizada</span></td><td class="text-[#8b95a7]">2026-08-01</td><td class="pl-[22px]"><div class="flex items-center text-[#8b95a7]"><svg class="w-[28px] h-[28px]"><use href="#i-eye"/></svg><svg class="ml-[24px] w-[28px] h-[28px]"><use href="#i-dl"/></svg><span class="flex items-center ml-[31px] gap-[8px] text-[#f87171]"><svg class="w-[28px] h-[28px]"><use href="#i-x"/></svg>Cancelar</span></div></td></tr>
            <tr class="h-[82px]"><td class="pl-[26px]"><span class="block w-[26px] h-[26px] mb-[8px] rounded-[4px] border-2 border-[#6b7585]"></span></td><td class="pl-[24px]"><span class="font-['DejaVu_Sans_Mono',monospace] text-[28px] font-bold">000008</span><span class="ml-[9px] text-[28px] text-[#8b95a7]">/</span><span class="ml-[17px] font-['DejaVu_Sans_Mono',monospace] text-[24px] text-[#7d8797]">001</span></td><td class="pl-[24px] text-[#dfe4ec]">NFCE</td><td class="pl-[24px] text-[28px]">Andre Rocha</td><td class="pl-[25px] text-[#3b82f6]">Venda #ca6f764b</td><td class="pr-[41px] text-right font-['DejaVu_Sans_Mono',monospace] text-[28px]">R$ 45,77</td><td class="pl-[24px]"><span class="inline-flex items-center h-[40px] px-[16px] rounded-full bg-[#163430] text-[#34d399]">Autorizada</span></td><td class="text-[#8b95a7]">2026-07-27</td><td class="pl-[22px]"><div class="flex items-center text-[#8b95a7]"><svg class="w-[28px] h-[28px]"><use href="#i-eye"/></svg><svg class="ml-[24px] w-[28px] h-[28px]"><use href="#i-dl"/></svg><span class="flex items-center ml-[31px] gap-[8px] text-[#f87171]"><svg class="w-[28px] h-[28px]"><use href="#i-x"/></svg>Cancelar</span></div></td></tr>
            <tr class="h-[82px]"><td class="pl-[26px]"><span class="block w-[26px] h-[26px] mb-[8px] rounded-[4px] border-2 border-[#6b7585]"></span></td><td class="pl-[24px]"><span class="font-['DejaVu_Sans_Mono',monospace] text-[28px] font-bold">000007</span><span class="ml-[9px] text-[28px] text-[#8b95a7]">/</span><span class="ml-[17px] font-['DejaVu_Sans_Mono',monospace] text-[24px] text-[#7d8797]">001</span></td><td class="pl-[24px] text-[#dfe4ec]">NFCE</td><td class="pl-[24px] text-[28px]">Juliana Barbosa</td><td class="pl-[25px] text-[#3b82f6]">Venda #2cc08723</td><td class="pr-[41px] text-right font-['DejaVu_Sans_Mono',monospace] text-[28px]">R$ 337,85</td><td class="pl-[24px]"><span class="inline-flex items-center h-[40px] px-[16px] rounded-full bg-[#163430] text-[#34d399]">Autorizada</span></td><td class="text-[#8b95a7]">2026-07-23</td><td class="pl-[22px]"><div class="flex items-center text-[#8b95a7]"><svg class="w-[28px] h-[28px]"><use href="#i-eye"/></svg><svg class="ml-[24px] w-[28px] h-[28px]"><use href="#i-dl"/></svg><span class="flex items-center ml-[31px] gap-[8px] text-[#f87171]"><svg class="w-[28px] h-[28px]"><use href="#i-x"/></svg>Cancelar</span></div></td></tr>
            <tr class="h-[82px]"><td class="pl-[26px]"><span class="block w-[26px] h-[26px] mb-[8px] rounded-[4px] border-2 border-[#6b7585]"></span></td><td class="pl-[24px]"><span class="font-['DejaVu_Sans_Mono',monospace] text-[28px] font-bold">000006</span><span class="ml-[9px] text-[28px] text-[#8b95a7]">/</span><span class="ml-[17px] font-['DejaVu_Sans_Mono',monospace] text-[24px] text-[#7d8797]">001</span></td><td class="pl-[24px] text-[#dfe4ec]">NFCE</td><td class="pl-[24px] text-[28px]">Thiago Mendes</td><td class="pl-[25px] text-[#3b82f6]">Venda #b1bdb121</td><td class="pr-[41px] text-right font-['DejaVu_Sans_Mono',monospace] text-[28px]">R$ 33,64</td><td class="pl-[24px]"><span class="inline-flex items-center h-[40px] px-[16px] rounded-full bg-[#163430] text-[#34d399]">Autorizada</span></td><td class="text-[#8b95a7]">2026-07-18</td><td class="pl-[22px]"><div class="flex items-center text-[#8b95a7]"><svg class="w-[28px] h-[28px]"><use href="#i-eye"/></svg><svg class="ml-[24px] w-[28px] h-[28px]"><use href="#i-dl"/></svg><span class="flex items-center ml-[31px] gap-[8px] text-[#f87171]"><svg class="w-[28px] h-[28px]"><use href="#i-x"/></svg>Cancelar</span></div></td></tr>
            <tr class="h-[82px]"><td class="pl-[26px]"><span class="block w-[26px] h-[26px] mb-[8px] rounded-[4px] border-2 border-[#6b7585]"></span></td><td class="pl-[24px]"><span class="font-['DejaVu_Sans_Mono',monospace] text-[28px] font-bold">000005</span><span class="ml-[9px] text-[28px] text-[#8b95a7]">/</span><span class="ml-[17px] font-['DejaVu_Sans_Mono',monospace] text-[24px] text-[#7d8797]">001</span></td><td class="pl-[24px] text-[#dfe4ec]">NFCE</td><td class="pl-[24px] text-[28px]">Eduardo Carvalho</td><td class="pl-[25px] text-[#3b82f6]">Venda #20267cc3</td><td class="pr-[41px] text-right font-['DejaVu_Sans_Mono',monospace] text-[28px]">R$ 113,34</td><td class="pl-[24px]"><span class="inline-flex items-center h-[40px] px-[16px] rounded-full bg-[#163430] text-[#34d399]">Autorizada</span></td><td class="text-[#8b95a7]">2026-07-13</td><td class="pl-[22px]"><div class="flex items-center text-[#8b95a7]"><svg class="w-[28px] h-[28px]"><use href="#i-eye"/></svg><svg class="ml-[24px] w-[28px] h-[28px]"><use href="#i-dl"/></svg><span class="flex items-center ml-[31px] gap-[8px] text-[#f87171]"><svg class="w-[28px] h-[28px]"><use href="#i-x"/></svg>Cancelar</span></div></td></tr>
            <tr class="h-[82px]"><td class="pl-[26px]"><span class="block w-[26px] h-[26px] mb-[8px] rounded-[4px] border-2 border-[#6b7585]"></span></td><td class="pl-[24px]"><span class="font-['DejaVu_Sans_Mono',monospace] text-[28px] font-bold">000004</span><span class="ml-[9px] text-[28px] text-[#8b95a7]">/</span><span class="ml-[17px] font-['DejaVu_Sans_Mono',monospace] text-[24px] text-[#7d8797]">001</span></td><td class="pl-[24px] text-[#dfe4ec]">NFCE</td><td class="pl-[24px] text-[28px]">Thiago Mendes</td><td class="pl-[25px] text-[#3b82f6]">Venda #2f707c76</td><td class="pr-[41px] text-right font-['DejaVu_Sans_Mono',monospace] text-[28px]">R$ 51,10</td><td class="pl-[24px]"><span class="inline-flex items-center h-[40px] px-[16px] rounded-full bg-[#163430] text-[#34d399]">Autorizada</span></td><td class="text-[#8b95a7]">2026-07-08</td><td class="pl-[22px]"><div class="flex items-center text-[#8b95a7]"><svg class="w-[28px] h-[28px]"><use href="#i-eye"/></svg><svg class="ml-[24px] w-[28px] h-[28px]"><use href="#i-dl"/></svg><span class="flex items-center ml-[31px] gap-[8px] text-[#f87171]"><svg class="w-[28px] h-[28px]"><use href="#i-x"/></svg>Cancelar</span></div></td></tr>
          </tbody>
        </table>
      </section>
    </main>
  </div>

  <!-- Floating assistant button -->
  <div class="absolute left-[2720px] top-[1640px] flex items-center justify-center w-[112px] h-[112px] rounded-full bg-[#3b82f6] text-white shadow-lg">
    <svg class="w-[52px] h-[52px] fill-none stroke-current stroke-2 [stroke-linecap:round] [stroke-linejoin:round]"><use href="#i-spark"/></svg>
  </div>
</div>
</body>
</html>
